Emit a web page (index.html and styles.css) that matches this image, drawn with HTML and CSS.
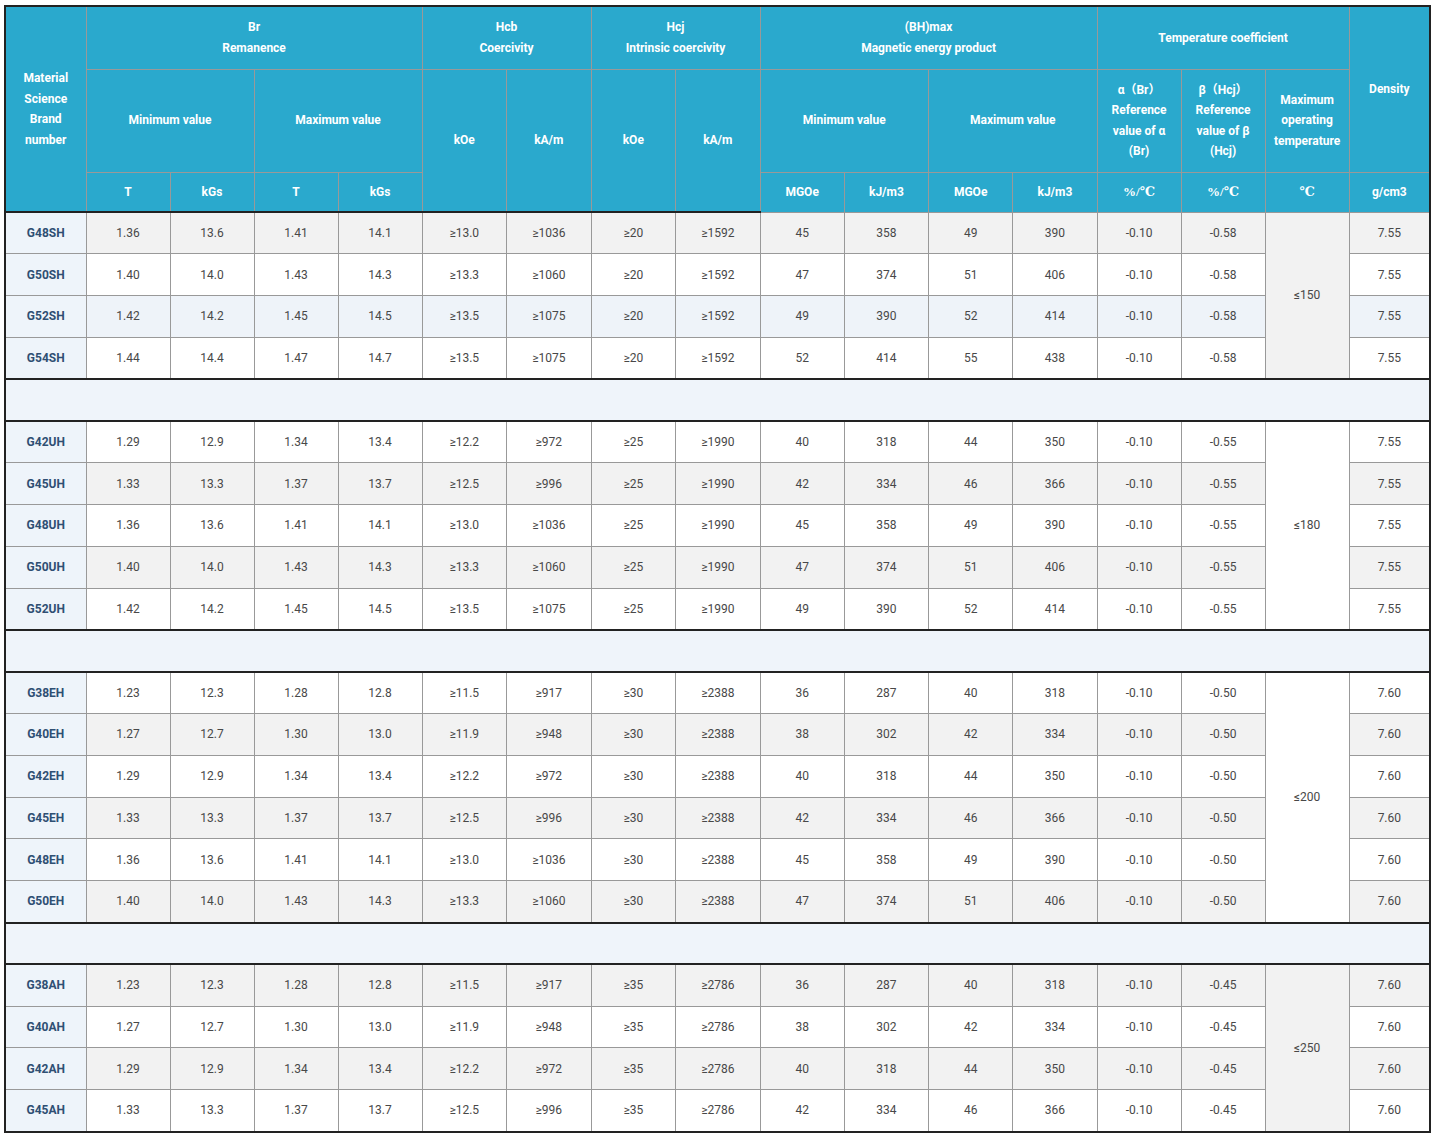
FILE: index.html
```html
<!DOCTYPE html>
<html lang="en">
<head>
<meta charset="utf-8">
<title>Magnet grades</title>
<link rel="stylesheet" href="styles.css">
</head>
<body>
<table class="spec">
<colgroup>
<col class="c-first">
<col class="c-a"><col class="c-a"><col class="c-a"><col class="c-a">
<col class="c-b"><col class="c-b"><col class="c-b"><col class="c-b">
<col class="c-c"><col class="c-c"><col class="c-c"><col class="c-c">
<col class="c-a"><col class="c-a"><col class="c-a">
<col class="c-last">
</colgroup>
<thead>
<tr class="h1">
<th rowspan="3" class="dk">Material<br>Science<br>Brand<br>number</th>
<th colspan="4">Br<br>Remanence</th>
<th colspan="2">Hcb<br>Coercivity</th>
<th colspan="2">Hcj<br>Intrinsic coercivity</th>
<th colspan="4">(BH)max<br>Magnetic energy product</th>
<th colspan="3">Temperature coefficient</th>
<th rowspan="2">Density</th>
</tr>
<tr class="h2">
<th colspan="2">Minimum value</th>
<th colspan="2">Maximum value</th>
<th rowspan="2" class="dk">kOe</th>
<th rowspan="2" class="dk">kA/m</th>
<th rowspan="2" class="dk">kOe</th>
<th rowspan="2" class="dk">kA/m</th>
<th colspan="2">Minimum value</th>
<th colspan="2">Maximum value</th>
<th>α<span class="cjk">（Br）</span><br>Reference<br>value of α<br>(Br)</th>
<th>β<span class="cjk">（Hcj）</span><br>Reference<br>value of β<br>(Hcj)</th>
<th>Maximum<br>operating<br>temperature</th>
</tr>
<tr class="h3">
<th class="dk">T</th>
<th class="dk">kGs</th>
<th class="dk">T</th>
<th class="dk">kGs</th>
<th>MGOe</th>
<th>kJ/m3</th>
<th>MGOe</th>
<th>kJ/m3</th>
<th><span class="serif">%/℃</span></th>
<th><span class="serif">%/℃</span></th>
<th><span class="serif">℃</span></th>
<th>g/cm3</th>
</tr>
</thead>
<tbody>
<tr class="odd"><td class="brand">G48SH</td><td>1.36</td><td>13.6</td><td>1.41</td><td>14.1</td><td>≥13.0</td><td>≥1036</td><td>≥20</td><td>≥1592</td><td>45</td><td>358</td><td>49</td><td>390</td><td>-0.10</td><td>-0.58</td><td rowspan="4" class="temp">≤150</td><td>7.55</td></tr>
<tr><td class="brand">G50SH</td><td>1.40</td><td>14.0</td><td>1.43</td><td>14.3</td><td>≥13.3</td><td>≥1060</td><td>≥20</td><td>≥1592</td><td>47</td><td>374</td><td>51</td><td>406</td><td>-0.10</td><td>-0.58</td><td>7.55</td></tr>
<tr class="hl"><td class="brand">G52SH</td><td>1.42</td><td>14.2</td><td>1.45</td><td>14.5</td><td>≥13.5</td><td>≥1075</td><td>≥20</td><td>≥1592</td><td>49</td><td>390</td><td>52</td><td>414</td><td>-0.10</td><td>-0.58</td><td>7.55</td></tr>
<tr><td class="brand">G54SH</td><td>1.44</td><td>14.4</td><td>1.47</td><td>14.7</td><td>≥13.5</td><td>≥1075</td><td>≥20</td><td>≥1592</td><td>52</td><td>414</td><td>55</td><td>438</td><td>-0.10</td><td>-0.58</td><td>7.55</td></tr>
<tr class="sep"><td colspan="17"></td></tr>
<tr><td class="brand">G42UH</td><td>1.29</td><td>12.9</td><td>1.34</td><td>13.4</td><td>≥12.2</td><td>≥972</td><td>≥25</td><td>≥1990</td><td>40</td><td>318</td><td>44</td><td>350</td><td>-0.10</td><td>-0.55</td><td rowspan="5" class="temp">≤180</td><td>7.55</td></tr>
<tr class="odd"><td class="brand">G45UH</td><td>1.33</td><td>13.3</td><td>1.37</td><td>13.7</td><td>≥12.5</td><td>≥996</td><td>≥25</td><td>≥1990</td><td>42</td><td>334</td><td>46</td><td>366</td><td>-0.10</td><td>-0.55</td><td>7.55</td></tr>
<tr><td class="brand">G48UH</td><td>1.36</td><td>13.6</td><td>1.41</td><td>14.1</td><td>≥13.0</td><td>≥1036</td><td>≥25</td><td>≥1990</td><td>45</td><td>358</td><td>49</td><td>390</td><td>-0.10</td><td>-0.55</td><td>7.55</td></tr>
<tr class="odd"><td class="brand">G50UH</td><td>1.40</td><td>14.0</td><td>1.43</td><td>14.3</td><td>≥13.3</td><td>≥1060</td><td>≥25</td><td>≥1990</td><td>47</td><td>374</td><td>51</td><td>406</td><td>-0.10</td><td>-0.55</td><td>7.55</td></tr>
<tr><td class="brand">G52UH</td><td>1.42</td><td>14.2</td><td>1.45</td><td>14.5</td><td>≥13.5</td><td>≥1075</td><td>≥25</td><td>≥1990</td><td>49</td><td>390</td><td>52</td><td>414</td><td>-0.10</td><td>-0.55</td><td>7.55</td></tr>
<tr class="sep"><td colspan="17"></td></tr>
<tr><td class="brand">G38EH</td><td>1.23</td><td>12.3</td><td>1.28</td><td>12.8</td><td>≥11.5</td><td>≥917</td><td>≥30</td><td>≥2388</td><td>36</td><td>287</td><td>40</td><td>318</td><td>-0.10</td><td>-0.50</td><td rowspan="6" class="temp">≤200</td><td>7.60</td></tr>
<tr class="odd"><td class="brand">G40EH</td><td>1.27</td><td>12.7</td><td>1.30</td><td>13.0</td><td>≥11.9</td><td>≥948</td><td>≥30</td><td>≥2388</td><td>38</td><td>302</td><td>42</td><td>334</td><td>-0.10</td><td>-0.50</td><td>7.60</td></tr>
<tr><td class="brand">G42EH</td><td>1.29</td><td>12.9</td><td>1.34</td><td>13.4</td><td>≥12.2</td><td>≥972</td><td>≥30</td><td>≥2388</td><td>40</td><td>318</td><td>44</td><td>350</td><td>-0.10</td><td>-0.50</td><td>7.60</td></tr>
<tr class="odd"><td class="brand">G45EH</td><td>1.33</td><td>13.3</td><td>1.37</td><td>13.7</td><td>≥12.5</td><td>≥996</td><td>≥30</td><td>≥2388</td><td>42</td><td>334</td><td>46</td><td>366</td><td>-0.10</td><td>-0.50</td><td>7.60</td></tr>
<tr><td class="brand">G48EH</td><td>1.36</td><td>13.6</td><td>1.41</td><td>14.1</td><td>≥13.0</td><td>≥1036</td><td>≥30</td><td>≥2388</td><td>45</td><td>358</td><td>49</td><td>390</td><td>-0.10</td><td>-0.50</td><td>7.60</td></tr>
<tr class="odd"><td class="brand">G50EH</td><td>1.40</td><td>14.0</td><td>1.43</td><td>14.3</td><td>≥13.3</td><td>≥1060</td><td>≥30</td><td>≥2388</td><td>47</td><td>374</td><td>51</td><td>406</td><td>-0.10</td><td>-0.50</td><td>7.60</td></tr>
<tr class="sep"><td colspan="17"></td></tr>
<tr class="odd"><td class="brand">G38AH</td><td>1.23</td><td>12.3</td><td>1.28</td><td>12.8</td><td>≥11.5</td><td>≥917</td><td>≥35</td><td>≥2786</td><td>36</td><td>287</td><td>40</td><td>318</td><td>-0.10</td><td>-0.45</td><td rowspan="4" class="temp">≤250</td><td>7.60</td></tr>
<tr><td class="brand">G40AH</td><td>1.27</td><td>12.7</td><td>1.30</td><td>13.0</td><td>≥11.9</td><td>≥948</td><td>≥35</td><td>≥2786</td><td>38</td><td>302</td><td>42</td><td>334</td><td>-0.10</td><td>-0.45</td><td>7.60</td></tr>
<tr class="odd"><td class="brand">G42AH</td><td>1.29</td><td>12.9</td><td>1.34</td><td>13.4</td><td>≥12.2</td><td>≥972</td><td>≥35</td><td>≥2786</td><td>40</td><td>318</td><td>44</td><td>350</td><td>-0.10</td><td>-0.45</td><td>7.60</td></tr>
<tr><td class="brand">G45AH</td><td>1.33</td><td>13.3</td><td>1.37</td><td>13.7</td><td>≥12.5</td><td>≥996</td><td>≥35</td><td>≥2786</td><td>42</td><td>334</td><td>46</td><td>366</td><td>-0.10</td><td>-0.45</td><td>7.60</td></tr>
</tbody>
</table>
</body>
</html>
```

FILE: styles.css
```css
html, body {
  margin: 0;
  background: #ffffff;
}
body {
  padding: 5px 4px;
  font-family: Roboto, "Noto Sans", "Liberation Sans", sans-serif;
}
.spec {
  width: 1427px;
  table-layout: fixed;
  border-collapse: collapse;
  border: 2px solid #222222;
  font-size: 12px;
}
.spec col.c-first { width: 81px; }
.spec col.c-a { width: 84px; }
.spec col.c-b { width: 84.5px; }
.spec col.c-c { width: 84.25px; }
.spec col.c-last { width: 81px; }

.spec th,
.spec td {
  border: 1px solid #999999;
  text-align: center;
  vertical-align: middle;
  padding: 0 4px;
}
.spec th {
  background: #2aa9cd;
  color: #ffffff;
  font-weight: 700;
  line-height: 20.5px;
}
.spec th.dk { border-bottom: 2px solid #222222; }
.spec .h1 { height: 63px; }
.spec .h2 { height: 103px; }
.spec .h3 { height: 40px; }

.cjk { font-family: Roboto, "Noto Sans CJK SC", sans-serif; }
.serif { font-family: "Liberation Serif", "DejaVu Serif", serif; font-weight: 700; font-size: 13px; }

.spec tbody tr { height: 41.8px; }
.spec td {
  color: #484848;
  background: #ffffff;
  font-weight: 400;
}
.spec tr.odd td { background: #f2f2f2; }
.spec tr.hl td { background: #eef3f9; }
.spec td.brand,
.spec tr.odd td.brand,
.spec tr.hl td.brand {
  background: #eef4fa;
  color: #2f4f73;
  font-weight: 700;
}
.spec tr.sep td {
  background: #eff4fa;
  border-top: 2px solid #222222;
  border-bottom: 2px solid #222222;
  border-left: 0;
  border-right: 0;
}
```
